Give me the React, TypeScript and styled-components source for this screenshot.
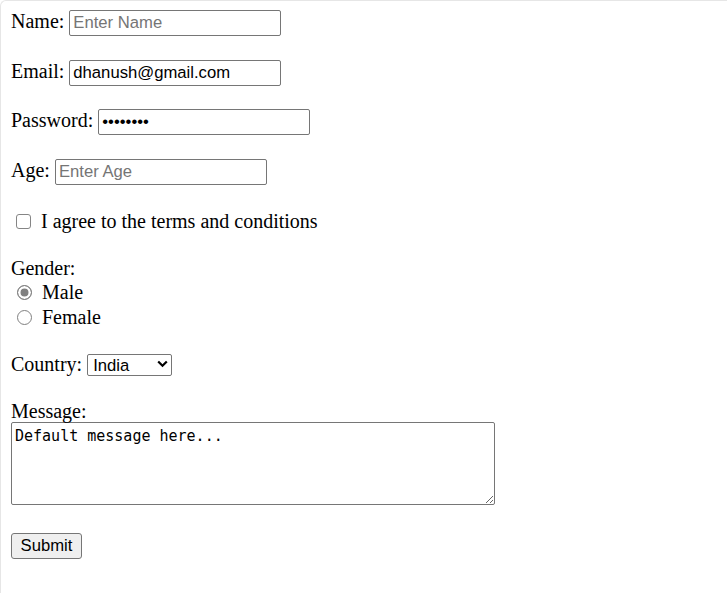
import React from "react";
import styled, { createGlobalStyle } from "styled-components";

const GlobalStyle = createGlobalStyle`
  html, body { margin: 0; padding: 0; background: #fff; }
  body {
    font-family: "Liberation Serif", "Times New Roman", serif;
    font-size: 20px;
    color: #000;
  }
`;

const Frame = styled.div`
  box-sizing: border-box;
  min-height: 100vh;
  border-top: 1px solid #e6e6e6;
  border-left: 1px solid #e6e6e6;
  border-top-left-radius: 6px;
  background: #fff;
`;

const Form = styled.form`
  padding: 9px 10px 20px;
`;

const Field = styled.div`
  margin-bottom: 23.6px;
  line-height: normal;
  white-space: nowrap;
`;

const Label = styled.label`
  margin-right: 5px;
`;

const TextInput = styled.input`
  box-sizing: border-box;
  width: 212px;
  height: 26px;
  margin: 0;
  padding: 0 3px;
  border: 1px solid #767676;
  border-radius: 2px;
  font-family: "Liberation Sans", Arial, sans-serif;
  font-size: 16.67px;
  color: #000;
  background: #fff;
  vertical-align: baseline;
  outline: none;
  &::placeholder {
    color: #757575;
    opacity: 1;
  }
`;

const CheckLine = styled.div`
  display: flex;
  align-items: center;
  height: 25.6px;
  margin-bottom: 22.6px;
`;

const Checkbox = styled.input`
  appearance: none;
  box-sizing: border-box;
  flex: none;
  width: 15px;
  height: 15px;
  margin: 0 10px 0 5px;
  border: 1px solid #858585;
  border-radius: 3px;
  background: #fff;
`;

const LineText = styled.label`
  line-height: 23px;
  white-space: nowrap;
`;

const Group = styled.div`
  margin-bottom: 23px;
`;

const GroupTitle = styled.div`
  line-height: 23px;
`;

const RadioLine = styled.div`
  display: flex;
  align-items: center;
  height: 25px;
`;

const Radio = styled.input`
  appearance: none;
  box-sizing: border-box;
  flex: none;
  width: 15px;
  height: 15px;
  margin: 0 10px 0 6px;
  border: 1px solid #808080;
  border-radius: 50%;
  background: #fff;
  &:checked {
    border-color: #7d7d7d;
    background: #808080;
    box-shadow: inset 0 0 0 2.5px #fff;
  }
`;

const SelectBox = styled.span`
  position: relative;
  display: inline-block;
  vertical-align: baseline;
`;

const Select = styled.select`
  appearance: none;
  box-sizing: border-box;
  width: 85px;
  height: 22px;
  margin: 0;
  padding: 0 0 0 5px;
  border: 1px solid #767676;
  border-radius: 2px;
  font-family: "Liberation Sans", Arial, sans-serif;
  font-size: 16.67px;
  color: #000;
  background: #fff;
  outline: none;
`;

const Chevron = styled.svg`
  position: absolute;
  right: 4px;
  top: 7px;
  width: 11px;
  height: 8px;
  pointer-events: none;
`;

const MessageLabel = styled.label`
  display: block;
  line-height: 22px;
`;

const MessageArea = styled.textarea`
  display: block;
  box-sizing: border-box;
  width: 484px;
  height: 83px;
  margin: 0 0 28.4px;
  padding: 4px 3px 2px;
  border: 1px solid #767676;
  border-radius: 2px;
  font-family: "DejaVu Sans Mono", "Liberation Mono", monospace;
  font-size: 15px;
  line-height: normal;
  color: #000;
  background: #fff;
  resize: both;
  outline: none;
`;

const SubmitButton = styled.button`
  box-sizing: border-box;
  width: 71px;
  height: 26px;
  margin: 0;
  padding: 0;
  font-family: "Liberation Sans", Arial, sans-serif;
  font-size: 16.67px;
  color: #000;
  background: #efefef;
  border: 1px solid #767676;
  border-radius: 3px;
`;

export default function App() {
  return (
    <>
      <GlobalStyle />
      <Frame>
        <Form onSubmit={(e) => e.preventDefault()}>
          <Field>
            <Label htmlFor="name">Name:</Label>
            <TextInput id="name" type="text" placeholder="Enter Name" />
          </Field>
          <Field>
            <Label htmlFor="email">Email:</Label>
            <TextInput id="email" type="email" defaultValue="dhanush@gmail.com" />
          </Field>
          <Field>
            <Label htmlFor="password">Password:</Label>
            <TextInput id="password" type="password" defaultValue="dhanush1" />
          </Field>
          <Field>
            <Label htmlFor="age">Age:</Label>
            <TextInput id="age" type="number" placeholder="Enter Age" />
          </Field>
          <CheckLine>
            <Checkbox id="terms" type="checkbox" />
            <LineText htmlFor="terms">I agree to the terms and conditions</LineText>
          </CheckLine>
          <Group>
            <GroupTitle>Gender:</GroupTitle>
            <RadioLine>
              <Radio id="male" type="radio" name="gender" defaultChecked />
              <LineText htmlFor="male">Male</LineText>
            </RadioLine>
            <RadioLine>
              <Radio id="female" type="radio" name="gender" />
              <LineText htmlFor="female">Female</LineText>
            </RadioLine>
          </Group>
          <Field>
            <Label htmlFor="country">Country:</Label>
            <SelectBox>
              <Select id="country" defaultValue="India">
                <option>India</option>
                <option>USA</option>
                <option>UK</option>
              </Select>
              <Chevron viewBox="0 0 11 8">
                <polyline points="1.2,1.5 5.5,5.8 9.8,1.5" fill="none" stroke="#000" strokeWidth="2.2" />
              </Chevron>
            </SelectBox>
          </Field>
          <MessageLabel htmlFor="message">Message:</MessageLabel>
          <MessageArea id="message" defaultValue="Default message here..." />
          <SubmitButton type="submit">Submit</SubmitButton>
        </Form>
      </Frame>
    </>
  );
}
